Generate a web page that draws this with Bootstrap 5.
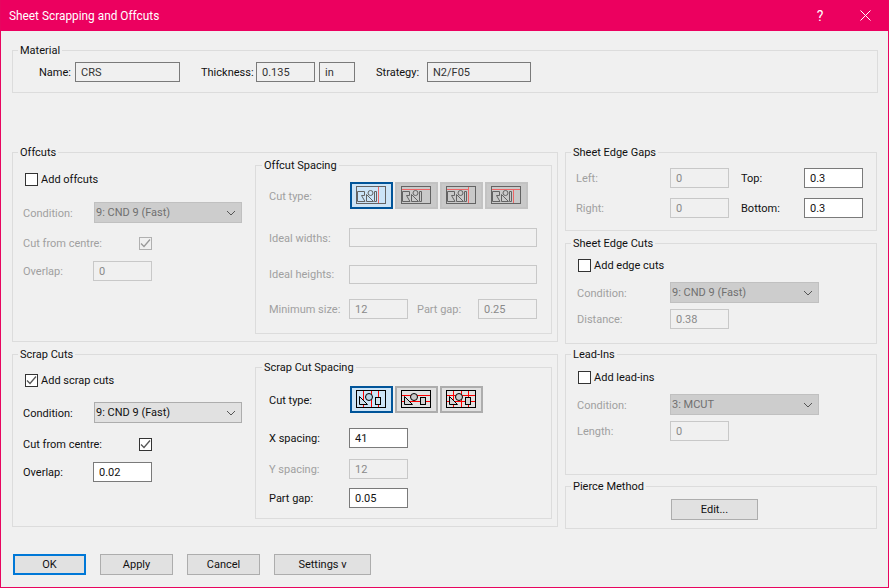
<!DOCTYPE html>
<html lang="en">
<head>
<meta charset="utf-8">
<title>Sheet Scrapping and Offcuts</title>
<link rel="stylesheet" href="https://cdn.jsdelivr.net/npm/bootstrap@5.3.0/dist/css/bootstrap.min.css">
<style>
html,body{margin:0;height:100%;background:#f0f0f0}
body{font:11px/16px Roboto,"Noto Sans",sans-serif;color:#111;overflow:hidden;white-space:nowrap}
.dlg{width:889px;height:588px;border:1px solid #e8055f;border-top:0;background:#f0f0f0}
.dlg-title{height:31px;background:#ec005f;color:#fff;padding-left:8px;font-size:11.85px}
.dlg-q{width:16px;text-align:center;margin-right:32px;font-size:14px}
.dlg-x{margin-right:17px}
.dlg-body{padding:11px 11px 0 11px}
.grp{border:1px solid #dcdcdc;margin:0;padding:0;min-width:0;display:block}
.grp>legend{float:none;width:auto;height:16px;margin:0 0 0 5px;padding:1px 2px 0;font:inherit;line-height:16px}
.grp>legend.lgi{margin-left:6px}
.left-col{width:546px}
.right-col{width:312px;margin-left:7px}
.g-mat{height:51px;width:866px}
.spacer-top{height:51px}
.h-off{height:198px}.h-scr{height:181px;margin-top:4px}
.h-gaps{height:87px}.h-cuts{height:109px;margin-top:4px}.h-lead{height:129px;margin-top:2px}.h-pierce{height:51px;margin-top:3px}
.dis{color:#a0a0a0}
.fc{display:block;border:1px solid #7a7a7a;border-radius:0;background:#fff;padding:0 5px;height:20px;font:inherit;line-height:18px;color:#111;box-shadow:none;min-height:0}
.fc.form-control[readonly]{background:#f0f0f0;color:#333}
.fc.form-control:disabled.off{border-color:#c8c8c8;color:#8a8a8a;background:#f0f0f0}
.w36{width:36px}.w59{width:59px}.w188{width:188px}.w105{width:105px}.w104{width:104px}
.sel{width:148px;height:21px;border:1px solid #adadad;background:#e1e1e1;font:inherit;line-height:19px;border-radius:0;color:#111;box-shadow:none}
.form-d .sel{width:149px}
.sel.form-select{padding:0 5px 0 1px;background-image:url("data:image/svg+xml,%3Csvg xmlns='http://www.w3.org/2000/svg' width='10' height='6'%3E%3Cpath d='M1 1l4 4 4-4' fill='none' stroke='%23555'/%3E%3C/svg%3E");background-size:10px 6px;background-position:right 5px center;background-repeat:no-repeat;min-height:0}
.sel.form-select:disabled{background-color:#cdcdcd;border-color:#c0c0c0;color:#707070}
.ck.form-check-input{width:13px;height:13px;margin:0;border:1px solid #333;border-radius:0;background-color:#fff;box-shadow:none;flex:none;opacity:1}
.ck.form-check-input.ck-m{margin-left:45px}
.ck.form-check-input:checked{background-color:#fff;border-color:#333;background-size:13px 13px;background-image:url("data:image/svg+xml,%3Csvg xmlns='http://www.w3.org/2000/svg' viewBox='0 0 13 13'%3E%3Cpath d='M2 6.5l3 3 6-7' fill='none' stroke='%23555' stroke-width='1.3'/%3E%3C/svg%3E")}
.ck.form-check-input:disabled{border-color:#b0b0b0;background-color:#f0f0f0;opacity:1}
.ck.form-check-input:disabled:checked{background-image:url("data:image/svg+xml,%3Csvg xmlns='http://www.w3.org/2000/svg' viewBox='0 0 13 13'%3E%3Cpath d='M2 6.5l3 3 6-7' fill='none' stroke='%23999' stroke-width='1.3'/%3E%3C/svg%3E")}
.tool{width:43px;height:27px;border:2px solid #c3c3c3;background:#c9c9c9;padding:0;border-radius:0;display:flex;align-items:center;justify-content:center}
.tool svg{display:block}
.tool.on{background:#cce4f7;border-color:#005499}
.tool.act{background:#e1e1e1;border-color:#adadad}
.tools{gap:2px;margin-left:1px}
.wbtn{height:21px;border:1px solid #adadad;background:#e1e1e1;border-radius:0;font:inherit;color:#111;padding:0;line-height:1}
.wbtn.dflt{border:2px solid #0078d7}
.b73{width:73px}.b97{width:97px}.b87{width:87px}
.foot{margin-top:25px;padding-left:1px;gap:14px}
.two{display:flex;padding:0 5px 0 10px}
.lf{width:232px;flex:none}
.rf{width:297px;margin-top:-3px}
.rf-o{height:177px}.rf-s{height:160px}
.cell-gap{grid-column:1/-1}
.form-a{display:grid;align-items:center;justify-items:start;grid-template-columns:71px 1fr}
.form-a .wide{grid-column:1/3}
.o-left{grid-template-rows:16px 15px 21px 12px 16px 10px 20px;padding-top:11px}
.s-left{grid-template-rows:16px 14px 21px 13px 16px 10px 20px;padding-top:10px}
.ckrow{display:flex;align-items:center;gap:3px;padding-left:2px}
.ovl{margin-left:-1px}
.form-b{display:grid;align-items:center;justify-items:start;grid-template-columns:80px 1fr;padding-left:13px}
.o-sp{grid-template-rows:27px 19px 19px 17px 20px 15px 20px;padding-top:9px}
.s-sp{grid-template-rows:27px 15px 20px 11px 20px 9px 20px;padding-top:11px}
.o-sp .w188{height:19px}
.pg{display:flex;align-items:center}
.pl{margin-left:9px;width:61px}
.form-c{display:grid;align-items:center;justify-items:start;grid-template-columns:94px 71px 63px 1fr;padding:8px 0 0 10px;grid-template-rows:20px 10px 20px}
.form-d{display:grid;align-items:center;justify-items:start;grid-template-columns:93px 1fr;padding-left:11px}
.form-d .ckrow{padding-left:1px}
.d-rows{grid-template-rows:16px 9px 21px 6px 20px}
.pad6{padding-top:6px}.pad7{padding-top:7px}
.span2{grid-column:1/3}
.mat-row{padding-left:26px;margin-top:4px}
.l36{width:36px}.l55{width:55px;margin-left:21px}.l51{width:51px;margin-left:21px}
.in-gap{margin-left:4px}
.p-btn{margin:5px 0 0 105px}
.form-a>span,.form-b>span,.form-c>span,.form-d>span,.ckrow>span,.pg>span,.mat-row>span{padding-top:2px}
</style>
</head>
<body>
<svg width="0" height="0" class="d-block"><defs><g id="fig" fill="none" stroke="#636363"><rect x=".5" y=".5" width="29" height="17"/><path d="M1.5 5.5h7v4h-3l3.5 6h-7.5zM10.5 8.5v7h7zM18.5 5.5h2v10h-2z"/><circle cx="14.5" cy="7" r="2.5"/></g></defs></svg>
<div class="dlg">
  <div class="dlg-title d-flex align-items-center">
    <span class="flex-grow-1">Sheet Scrapping and Offcuts</span>
    <span class="dlg-q">?</span>
    <svg class="dlg-x" width="11" height="11" viewBox="0 0 11 11"><path d="M.5.5l10 10M10.5.5l-10 10" stroke="#fff" fill="none"/></svg>
  </div>
  <div class="dlg-body">
    <fieldset class="grp g-mat">
      <legend>Material</legend>
      <div class="d-flex align-items-center mat-row">
        <span class="l36">Name:</span><input class="form-control fc w105" readonly value="CRS">
        <span class="l55">Thickness:</span><input class="form-control fc w59" readonly value="0.135">
        <input class="form-control fc w36 in-gap" readonly value="in">
        <span class="l51">Strategy:</span><input class="form-control fc w104" readonly value="N2/F05">
      </div>
    </fieldset>
    <div class="spacer-top"></div>
    <div class="d-flex">
      <div class="left-col">
        <fieldset class="grp h-off">
          <legend>Offcuts</legend>
          <div class="two">
            <div class="lf form-a o-left">
              <label class="ckrow wide"><input type="checkbox" class="form-check-input ck"><span>Add offcuts</span></label>
              <i class="cell-gap"></i>
              <span class="dis">Condition:</span>
              <select class="form-select sel" disabled><option>9: CND 9 (Fast)</option></select>
              <i class="cell-gap"></i>
              <span class="dis">Cut from centre:</span>
              <input type="checkbox" class="form-check-input ck ck-m" checked disabled>
              <i class="cell-gap"></i>
              <span class="dis">Overlap:</span>
              <input class="form-control fc w59 off ovl" disabled value="0">
            </div>
            <fieldset class="grp rf rf-o">
              <legend class="lgi">Offcut Spacing</legend>
              <div class="form-b o-sp">
                <span class="dis">Cut type:</span>
                <div class="d-flex tools">
                  <button class="tool on" type="button"><svg width="31" height="19" viewBox="0 0 31 19"><use href="#fig"/><path d="M22.5 1v16" stroke="#e66" fill="none"/></svg></button>
                  <button class="tool" type="button"><svg width="31" height="19" viewBox="0 0 31 19"><use href="#fig"/><path d="M1 3.5h28" stroke="#e66"/></svg></button>
                  <button class="tool" type="button"><svg width="31" height="19" viewBox="0 0 31 19"><use href="#fig"/><path d="M1 3.5h21M22.5 1v16" stroke="#e66" fill="none"/></svg></button>
                  <button class="tool" type="button"><svg width="31" height="19" viewBox="0 0 31 19"><use href="#fig"/><path d="M1 3.5h28M22.5 4v13" stroke="#e66" fill="none"/></svg></button>
                </div>
                <i class="cell-gap"></i>
                <span class="dis">Ideal widths:</span><input class="form-control fc w188 off" disabled>
                <i class="cell-gap"></i>
                <span class="dis">Ideal heights:</span><input class="form-control fc w188 off" disabled>
                <i class="cell-gap"></i>
                <span class="dis">Minimum size:</span>
                <div class="pg"><input class="form-control fc w59 off" disabled value="12"><span class="pl dis">Part gap:</span><input class="form-control fc w59 off" disabled value="0.25"></div>
              </div>
            </fieldset>
          </div>
        </fieldset>
        <fieldset class="grp h-scr">
          <legend>Scrap Cuts</legend>
          <div class="two">
            <div class="lf form-a s-left">
              <label class="ckrow wide"><input type="checkbox" class="form-check-input ck" checked><span>Add scrap cuts</span></label>
              <i class="cell-gap"></i>
              <span>Condition:</span>
              <select class="form-select sel"><option>9: CND 9 (Fast)</option></select>
              <i class="cell-gap"></i>
              <span>Cut from centre:</span>
              <input type="checkbox" class="form-check-input ck ck-m" checked>
              <i class="cell-gap"></i>
              <span>Overlap:</span>
              <input class="form-control fc w59 ovl" value="0.02">
            </div>
            <fieldset class="grp rf rf-s">
              <legend class="lgi">Scrap Cut Spacing</legend>
              <div class="form-b s-sp">
                <span>Cut type:</span>
                <div class="d-flex tools">
                  <button class="tool on" type="button"><svg width="31" height="19" viewBox="0 0 31 19"><rect x=".5" y=".5" width="29" height="17" fill="none" stroke="#000"/><path d="M7.5 1v16M15.5 1v16M22.5 1v16" stroke="#f00"/><path d="M3.5 6.5v8h8z" fill="#cfe0ec" stroke="#000"/><circle cx="13" cy="7" r="3.5" fill="#b9d3e6" stroke="#000"/><rect x="19.5" y="7.5" width="5" height="7" fill="#cfe0ec" stroke="#000"/></svg></button>
                  <button class="tool act" type="button"><svg width="31" height="19" viewBox="0 0 31 19"><rect x=".5" y=".5" width="29" height="17" fill="none" stroke="#000"/><path d="M1 5.5h28M1 11.5h28" stroke="#f00"/><path d="M3.5 6.5v8h8z" fill="#d4d4d4" stroke="#000"/><circle cx="13" cy="7" r="3.5" fill="#c9c9c9" stroke="#000"/><rect x="19.5" y="7.5" width="5" height="7" fill="#d4d4d4" stroke="#000"/></svg></button>
                  <button class="tool act" type="button"><svg width="31" height="19" viewBox="0 0 31 19"><rect x=".5" y=".5" width="29" height="17" fill="none" stroke="#000"/><path d="M1 5.5h28M1 11.5h28M7.5 1v16M15.5 1v16M22.5 1v16" stroke="#f00"/><path d="M3.5 6.5v8h8z" fill="#d4d4d4" stroke="#000"/><circle cx="13" cy="7" r="3.5" fill="#c9c9c9" stroke="#000"/><rect x="19.5" y="7.5" width="5" height="7" fill="#d4d4d4" stroke="#000"/></svg></button>
                </div>
                <i class="cell-gap"></i>
                <span>X spacing:</span><input class="form-control fc w59" value="41">
                <i class="cell-gap"></i>
                <span class="dis">Y spacing:</span><input class="form-control fc w59 off" disabled value="12">
                <i class="cell-gap"></i>
                <span>Part gap:</span><input class="form-control fc w59" value="0.05">
              </div>
            </fieldset>
          </div>
        </fieldset>
      </div>
      <div class="right-col">
        <fieldset class="grp h-gaps">
          <legend>Sheet Edge Gaps</legend>
          <div class="form-c">
            <span class="dis">Left:</span><input class="form-control fc w59 off" disabled value="0"><span>Top:</span><input class="form-control fc w59" value="0.3">
            <i class="cell-gap"></i>
            <span class="dis">Right:</span><input class="form-control fc w59 off" disabled value="0"><span>Bottom:</span><input class="form-control fc w59" value="0.3">
          </div>
        </fieldset>
        <fieldset class="grp h-cuts">
          <legend>Sheet Edge Cuts</legend>
          <div class="form-d d-rows pad6">
            <label class="ckrow span2"><input type="checkbox" class="form-check-input ck"><span>Add edge cuts</span></label>
            <i class="cell-gap"></i>
            <span class="dis">Condition:</span><select class="form-select sel" disabled><option>9: CND 9 (Fast)</option></select>
            <i class="cell-gap"></i>
            <span class="dis">Distance:</span><input class="form-control fc w59 off" disabled value="0.38">
          </div>
        </fieldset>
        <fieldset class="grp h-lead">
          <legend>Lead-Ins</legend>
          <div class="form-d d-rows pad7">
            <label class="ckrow span2"><input type="checkbox" class="form-check-input ck"><span>Add lead-ins</span></label>
            <i class="cell-gap"></i>
            <span class="dis">Condition:</span><select class="form-select sel" disabled><option>3: MCUT</option></select>
            <i class="cell-gap"></i>
            <span class="dis">Length:</span><input class="form-control fc w59 off" disabled value="0">
          </div>
        </fieldset>
        <fieldset class="grp h-pierce">
          <legend>Pierce Method</legend>
          <button class="btn wbtn b87 p-btn" type="button">Edit...</button>
        </fieldset>
      </div>
    </div>
    <div class="d-flex foot">
      <button class="btn wbtn b73 dflt" type="button">OK</button>
      <button class="btn wbtn b73" type="button">Apply</button>
      <button class="btn wbtn b73" type="button">Cancel</button>
      <button class="btn wbtn b97" type="button">Settings v</button>
    </div>
  </div>
</div>
<script src="https://cdn.jsdelivr.net/npm/bootstrap@5.3.0/dist/js/bootstrap.bundle.min.js"></script>
</body>
</html>
